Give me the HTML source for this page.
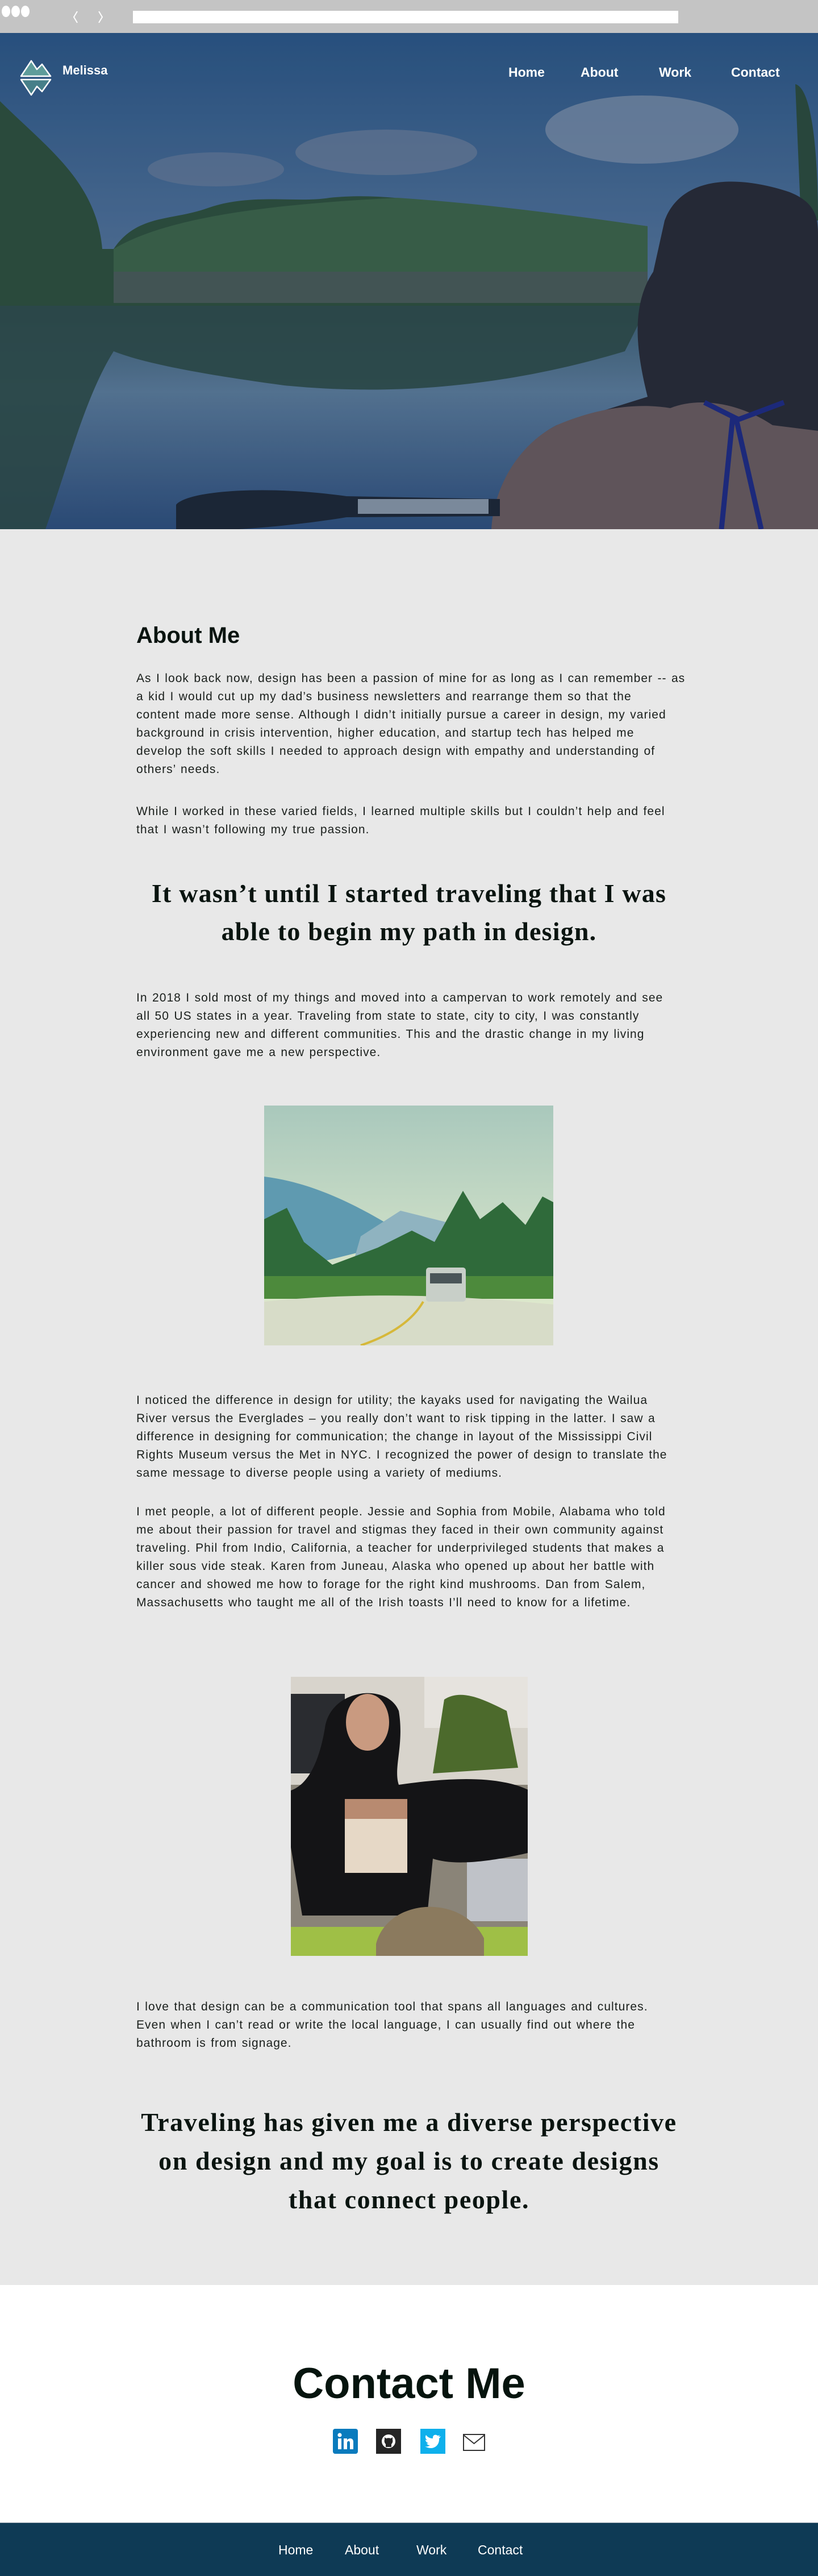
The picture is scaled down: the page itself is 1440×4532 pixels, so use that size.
<!DOCTYPE html>
<html><head><meta charset="utf-8">
<style>
*{margin:0;padding:0;box-sizing:border-box}
body{width:1440px;height:4532px;background:#e8e8e8;font-family:"Liberation Sans",sans-serif;color:#0a1410;position:relative;overflow:hidden}
.bar{position:absolute;left:0;top:0;width:1440px;height:58px;background:#c4c4c4}
.dot{position:absolute;top:10px;width:15px;height:20px;border-radius:50%;background:#fff}
.url{position:absolute;left:234px;top:19px;width:960px;height:22px;background:#fff}
.hero{position:absolute;left:0;top:58px;width:1440px;height:873px;overflow:hidden}
.nav{position:absolute;top:114px;color:#fff;font-size:23px;font-weight:bold}
.brand{position:absolute;left:110px;top:111px;color:#fff;font-size:22px;font-weight:bold}
.c{position:absolute;left:240px;width:1000px;font-size:21px;line-height:32px;letter-spacing:1.05px;word-spacing:1.5px;white-space:nowrap;color:#1a1f1c}
h2.am{position:absolute;left:240px;top:1096px;font-size:40px;font-weight:bold;color:#0a1410}
.q{position:absolute;left:0;width:1440px;text-align:center;font-family:"Liberation Serif",serif;font-weight:bold;font-size:46px;color:#0a1410;letter-spacing:1.2px}
.contact{position:absolute;left:0;top:4020px;width:1440px;height:418px;background:#fff}
.foot{position:absolute;left:0;top:4438px;width:1440px;height:94px;background:#0e3a55;border-top:1px solid #6a8090}
.fl{position:absolute;top:34px;color:#fff;font-size:23px}
</style></head><body>
<div class="bar">
<div class="dot" style="left:3px"></div><div class="dot" style="left:20px"></div><div class="dot" style="left:37px"></div>
<svg style="position:absolute;left:128px;top:16px" width="60" height="28"><path d="M8 4 L2 14 L8 24 M46 4 L52 14 L46 24" stroke="#fff" stroke-width="2" fill="none"/></svg>
<div class="url"></div>
</div>
<div class="hero">
<svg width="1440" height="873" viewBox="0 0 1440 873">
<defs>
<linearGradient id="sky" x1="0" y1="0" x2="0" y2="1"><stop offset="0" stop-color="#2c5583"/><stop offset=".4" stop-color="#4f6f95"/><stop offset="1" stop-color="#6e8aa6"/></linearGradient>
<linearGradient id="wat" x1="0" y1="0" x2="0" y2="1"><stop offset="0" stop-color="#3a5a6a"/><stop offset=".4" stop-color="#5d7b98"/><stop offset="1" stop-color="#2f4e7a"/></linearGradient>
</defs>
<rect width="1440" height="873" fill="url(#sky)"/>
<ellipse cx="1130" cy="170" rx="170" ry="60" fill="#7d8ea6" opacity=".8"/>
<ellipse cx="680" cy="210" rx="160" ry="40" fill="#6f7f99" opacity=".7"/>
<ellipse cx="380" cy="240" rx="120" ry="30" fill="#6f7f99" opacity=".6"/>
<rect y="470" width="1440" height="403" fill="url(#wat)"/>
<path d="M0 120 C80 200 170 260 180 380 L200 380 C240 320 300 330 360 310 C440 280 520 300 580 290 C680 280 760 300 860 310 C960 320 1060 330 1140 340 L1140 480 L0 480Z" fill="#2f4f3a"/>
<path d="M200 380 C300 320 500 300 700 290 C850 300 1000 320 1140 340 L1140 420 L200 430Z" fill="#3e6446"/>
<rect x="200" y="420" width="940" height="55" fill="#4a5a55"/>
<path d="M0 480 L1140 480 L1100 560 C900 620 700 640 500 620 C350 600 250 580 200 560 C150 640 120 760 80 873 L0 873Z" fill="#2f4a44" opacity=".9"/>
<path d="M1400 90 C1440 100 1440 300 1440 330 L1410 330Z" fill="#2d4a3a"/>
<path d="M1170 330 C1200 250 1300 250 1390 280 C1440 300 1440 330 1440 360 L1440 873 L870 873 C880 790 920 720 980 690 L1140 640 C1120 560 1110 480 1150 420Z" fill="#2a2a33"/>
<path d="M980 690 C1050 660 1120 650 1180 660 C1230 640 1300 650 1360 690 L1440 700 L1440 873 L865 873 C870 790 920 720 980 690Z" fill="#6b5a5c"/>
<path d="M1240 650 L1300 680 L1380 650 M1290 675 L1270 873 M1295 675 L1340 873" stroke="#1f2a80" stroke-width="9" fill="none"/>
<path d="M310 830 C330 805 470 795 610 815 L880 820 L880 850 L610 852 C500 870 360 880 310 873Z" fill="#1e2633"/>
<rect x="630" y="820" width="230" height="26" fill="#8a97a6"/>
<rect width="1440" height="873" fill="#0b2a55" opacity=".12"/>
</svg>
<svg style="position:absolute;left:34px;top:45px" width="60" height="68" viewBox="0 0 60 68">
<path d="M3 31 L21 4 L31 19 L40 10 L55 31Z" fill="#5e9c9a" stroke="#fff" stroke-width="2.5" stroke-linejoin="round"/>
<path d="M3 37 L55 37 L40 58 L31 49 L21 64Z" fill="#467f89" stroke="#fff" stroke-width="2.5" stroke-linejoin="round"/>
</svg>
</div>
<div class="brand">Melissa</div>
<div class="nav" style="left:895px">Home</div>
<div class="nav" style="left:1022px">About</div>
<div class="nav" style="left:1160px">Work</div>
<div class="nav" style="left:1287px">Contact</div>

<h2 class="am">About Me</h2>
<div class="c" style="top:1178px">As I look back now, design has been a passion of mine for as long as I can remember -- as<br>a kid I would cut up my dad’s business newsletters and rearrange them so that the<br>content made more sense. Although I didn’t initially pursue a career in design, my varied<br>background in crisis intervention, higher education, and startup tech has helped me<br>develop the soft skills I needed to approach design with empathy and understanding of<br>others’ needs.</div>
<div class="c" style="top:1412px">While I worked in these varied fields, I learned multiple skills but I couldn’t help and feel<br>that I wasn’t following my true passion.</div>
<div class="q" style="top:1538px;line-height:67px">It wasn’t until I started traveling that I was<br>able to begin my path in design.</div>
<div class="c" style="top:1740px">In 2018 I sold most of my things and moved into a campervan to work remotely and see<br>all 50 US states in a year. Traveling from state to state, city to city, I was constantly<br>experiencing new and different communities. This and the drastic change in my living<br>environment gave me a new perspective.</div>

<svg style="position:absolute;left:465px;top:1945px" width="509" height="422" viewBox="0 0 509 422">
<defs><linearGradient id="s1" x1="0" y1="0" x2="0" y2="1"><stop offset="0" stop-color="#a9c8bc"/><stop offset="1" stop-color="#e8efcf"/></linearGradient></defs>
<rect width="509" height="422" fill="url(#s1)"/>
<path d="M0 125 C80 135 160 170 260 235 L0 300Z" fill="#5f9ab0"/>
<path d="M170 230 L240 185 L300 200 L360 215 L509 210 L509 300 L150 300Z" fill="#8fb3c0"/>
<path d="M0 200 L40 180 L70 240 L120 280 L200 250 L260 220 L300 240 L350 150 L380 200 L420 170 L460 210 L490 160 L509 170 L509 340 L0 340Z" fill="#2f6a3a"/>
<path d="M0 300 L509 300 L509 340 L0 340Z" fill="#4d8a3c"/>
<path d="M0 345 C150 330 300 330 509 350 L509 422 L0 422Z" fill="#d7dcc8"/>
<path d="M280 345 C260 380 220 405 170 422" stroke="#d6b83a" stroke-width="4" fill="none"/>
<rect x="285" y="285" width="70" height="60" rx="5" fill="#c8cfc8"/><rect x="292" y="295" width="56" height="18" fill="#4a5558"/>
</svg>

<div class="c" style="top:2448px">I noticed the difference in design for utility; the kayaks used for navigating the Wailua<br>River versus the Everglades – you really don’t want to risk tipping in the latter. I saw a<br>difference in designing for communication; the change in layout of the Mississippi Civil<br>Rights Museum versus the Met in NYC. I recognized the power of design to translate the<br>same message to diverse people using a variety of mediums.</div>
<div class="c" style="top:2644px">I met people, a lot of different people. Jessie and Sophia from Mobile, Alabama who told<br>me about their passion for travel and stigmas they faced in their own community against<br>traveling. Phil from Indio, California, a teacher for underprivileged students that makes a<br>killer sous vide steak. Karen from Juneau, Alaska who opened up about her battle with<br>cancer and showed me how to forage for the right kind mushrooms. Dan from Salem,<br>Massachusetts who taught me all of the Irish toasts I’ll need to know for a lifetime.</div>

<svg style="position:absolute;left:512px;top:2950px" width="417" height="491" viewBox="0 0 417 491">
<rect width="417" height="491" fill="#8a8478"/>
<rect x="0" y="0" width="417" height="190" fill="#d8d4cc"/>
<rect x="0" y="30" width="95" height="140" fill="#2a2c30"/>
<rect x="235" y="0" width="182" height="90" fill="#e6e3de"/>
<path d="M270 40 C300 20 340 40 380 60 L400 160 L250 170Z" fill="#4c6a2c"/>
<rect x="310" y="320" width="107" height="110" fill="#bfc2c8"/>
<path d="M60 90 C70 20 170 10 190 60 C200 120 180 160 190 190 C260 180 360 170 420 200 L417 310 C330 330 280 330 250 320 L240 420 L20 420 L0 300 L0 200 C30 190 50 150 60 90Z" fill="#141416"/>
<ellipse cx="135" cy="80" rx="38" ry="50" fill="#c99a80"/>
<rect x="95" y="215" width="110" height="130" fill="#e6d8c6"/><rect x="95" y="215" width="110" height="35" fill="#b88a70"/>
<rect x="0" y="440" width="417" height="51" fill="#9fbf46"/>
<path d="M150 470 C170 390 300 380 340 460 L340 491 L150 491Z" fill="#8b7a5e"/>
</svg>

<div class="c" style="top:3515px">I love that design can be a communication tool that spans all languages and cultures.<br>Even when I can’t read or write the local language, I can usually find out where the<br>bathroom is from signage.</div>
<div class="q" style="top:3700px;line-height:68px;letter-spacing:1.6px">Traveling has given me a diverse perspective<br>on design and my goal is to create designs<br>that connect people.</div>

<div class="contact">
<div style="position:absolute;left:0;width:1440px;top:130px;text-align:center;font-size:76px;font-weight:bold;color:#06140e">Contact Me</div>
<svg style="position:absolute;left:586px;top:253px" width="44" height="44" viewBox="0 0 44 44"><rect width="44" height="44" rx="4" fill="#0a7bbd"/><rect x="9" y="17" width="6" height="19" fill="#fff"/><circle cx="12" cy="11" r="3.6" fill="#fff"/><path d="M19 17 H25 V20 C27 16 36 15 36 23 V36 H30 V25 C30 20 25 21 25 25 V36 H19Z" fill="#fff"/></svg>
<svg style="position:absolute;left:662px;top:253px" width="44" height="44" viewBox="0 0 44 44"><rect width="44" height="44" fill="#252525"/><circle cx="22" cy="22" r="12" fill="#fff"/><path d="M17 32 V27 C15 25 14 22 15 19 L15 15 L18 17 C20 16 24 16 26 17 L29 15 L29 19 C30 22 29 25 27 27 V32Z" fill="#252525"/></svg>
<svg style="position:absolute;left:740px;top:253px" width="44" height="44" viewBox="0 0 44 44"><rect width="44" height="44" fill="#0eb0ec"/><path d="M36 13 C34 14 33 14 32 14 C33 13 34 12 34 11 C33 12 31 12 30 12 C27 9 21 11 22 17 C17 17 13 15 10 11 C8 14 9 18 12 20 C11 20 10 20 9 19 C9 22 11 24 14 25 C13 26 12 26 11 25 C12 28 14 29 17 29 C14 31 11 32 8 31 C22 39 34 30 33 17 C34 16 35 15 36 13Z" fill="#fff"/></svg>
<svg style="position:absolute;left:815px;top:262px" width="39" height="30" viewBox="0 0 39 30"><rect x="1" y="1" width="37" height="28" fill="#fff" stroke="#333" stroke-width="2"/><path d="M1 2 L19.5 17 L38 2" stroke="#333" stroke-width="2" fill="none"/></svg>
</div>
<div class="foot">
<div class="fl" style="left:490px">Home</div>
<div class="fl" style="left:607px">About</div>
<div class="fl" style="left:733px">Work</div>
<div class="fl" style="left:841px">Contact</div>
</div>
</body></html>
